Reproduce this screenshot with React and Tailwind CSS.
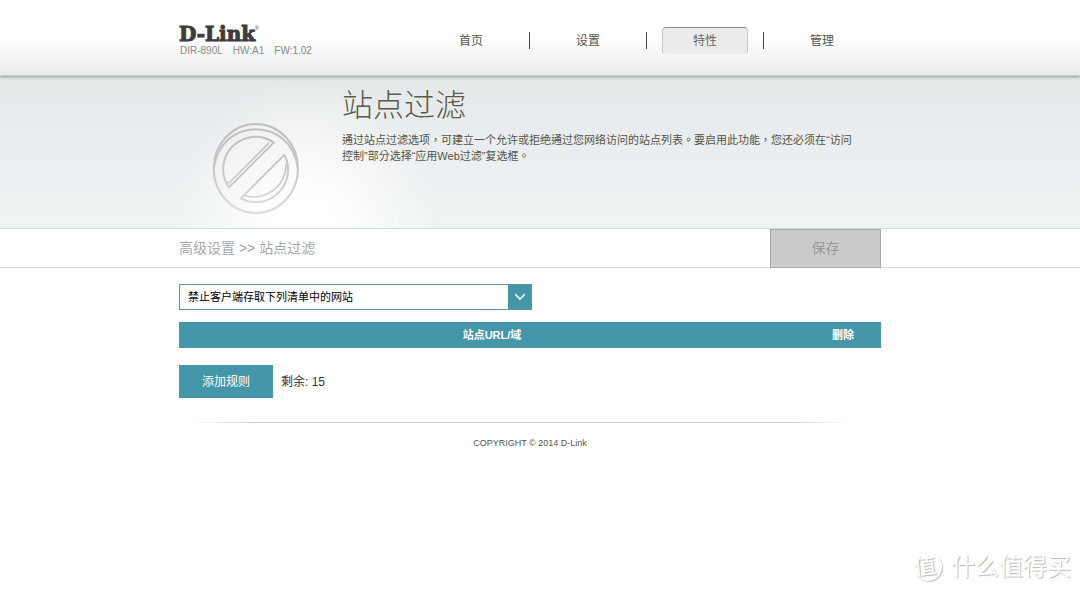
import React from "react";

const NAV = ["首页", "设置", "特性", "管理"];
const ACTIVE = "特性";

function Header() {
  return (
    <header className="relative z-10 border-b border-[#cdd2d2] bg-linear-to-b from-white from-50% to-[#e9ebeb] pr-5 shadow-[0_1px_3px_rgba(90,100,100,0.6)]">
      <div className="mx-auto flex h-[75px] max-w-[702px] items-start">
        <div className="w-[233px] shrink-0 pt-6">
          <a href="#home" className="flex items-start text-[#3c3c3c]">
            <span className="font-['DejaVu_Serif'] text-[20px] leading-5 font-bold [-webkit-text-stroke:1px_#3c3c3c]">
              D-Link
            </span>
            <span className="text-[5px] leading-2">®</span>
          </a>
          <p className="flex gap-[10px] pl-px text-[10px] leading-[14px] text-[#8a8a8a]">
            <span>DIR-890L</span>
            <span>HW:A1</span>
            <span>FW:1.02</span>
          </p>
        </div>
        <nav className="flex pt-[27px]">
          {NAV.map((item, i) => (
            <div key={item} className="flex w-[117px] shrink-0 items-center">
              <span className={i === 0 ? "h-[17px] w-px" : "h-[17px] w-px bg-[#444]"} />
              <a
                href={"#" + item}
                className={
                  item === ACTIVE
                    ? "mx-auto flex h-[27px] w-[86px] items-center justify-center rounded-[4px] border border-x-[#c4c4c4] border-t-[#8a8a8a] border-b-[#ededed] bg-[#ebebeb] text-[12px] text-[#666]"
                    : "mx-auto flex h-[27px] w-[86px] items-center justify-center text-[12px] text-[#555]"
                }
              >
                {item}
              </a>
            </div>
          ))}
        </nav>
      </div>
    </header>
  );
}

function BlockIcon() {
  return (
    <svg viewBox="60 120 280 290" className="h-[97px] w-[93px]" fill="none" aria-hidden="true">
      <defs>
        <linearGradient id="ring" gradientUnits="userSpaceOnUse" x1="0" y1="125" x2="0" y2="405">
          <stop offset="0" stopColor="#bcbebf" />
          <stop offset="0.6" stopColor="#c8c9ca" />
          <stop offset="1" stopColor="#dedfe0" />
        </linearGradient>
      </defs>
      <g stroke="url(#ring)" strokeWidth="6" strokeLinejoin="round">
        <ellipse cx="198" cy="265" rx="127" ry="134" />
        <path d="M72 262C82 192 133 147 198 147s117 45 126 115" />
        <path d="M117 322A97 97 0 0 1 252 187Z" />
        <path d="M112 307L118 308 238 188" strokeWidth="5" />
        <path d="M153 355L284 224A97 97 0 0 1 153 355Z" />
        <path d="M163 346C195 356 228 348 254 328C280 307 290 282 289 250" strokeWidth="5" />
      </g>
    </svg>
  );
}

function Hero() {
  return (
    <section className="border-b border-[#d3dada] bg-[radial-gradient(ellipse_135px_165px_at_calc(50%_-_235px)_165px,#fff_25%,rgba(255,255,255,0.5)_60%,transparent),linear-gradient(#e4e8e9,#ebeef1_50%,#eef3f3)] pr-5">
      <div className="mx-auto flex h-[152px] max-w-[702px]">
        <div className="w-[163px] shrink-0 pt-11 pl-[31px]">
          <BlockIcon />
        </div>
        <div className="pt-[10px]">
          <h1 className="text-[31px] leading-10 font-light text-[#5a5a48]">站点过滤</h1>
          <p className="mt-[6px] max-w-[520px] font-['Liberation_Sans','Noto_Sans_CJK_TC',sans-serif] text-[11px] leading-4 text-[#54543f]">
            通过站点过滤选项，可建立一个允许或拒绝通过您网络访问的站点列表。要启用此功能，您还必须在“访问控制”部分选择“应用Web过滤”复选框。
          </p>
        </div>
      </div>
    </section>
  );
}

function CrumbBar() {
  return (
    <div className="border-b border-[#dcdfdf] pr-5">
      <div className="mx-auto flex h-[38px] max-w-[702px] items-center justify-between">
        <p className="text-[14px] text-[#a8a8a8]">高级设置 &gt;&gt; 站点过滤</p>
        <button
          type="button"
          className="-mb-px h-[39px] w-[111px] border border-[#a9a9a9] bg-[#cbcbcb] text-[14px] text-[#999]"
        >
          保存
        </button>
      </div>
    </div>
  );
}

function RulesForm() {
  return (
    <main className="mx-auto max-w-[702px] pt-4">
      <div className="relative flex h-[26px] w-[353px] border border-[#5f929b]">
        <select
          aria-label="过滤方式"
          className="w-full appearance-none bg-white pr-7 pl-2 text-[11px] text-black"
        >
          <option>禁止客户端存取下列清单中的网站</option>
        </select>
        <span className="pointer-events-none absolute inset-y-0 right-0 flex w-[23px] items-center justify-center bg-[#4396a8]">
          <svg viewBox="0 0 12 8" className="h-2 w-3" fill="none" stroke="#fff" strokeWidth="1.6" aria-hidden="true">
            <path d="M1.2 1.2L6 6l4.8-4.8" />
          </svg>
        </span>
      </div>

      <table className="mt-3 w-full table-fixed bg-[#4696a9] text-[11px] text-white">
        <thead>
          <tr className="h-[26px]">
            <th scope="col" className="font-bold">站点URL/域</th>
            <th scope="col" className="w-[76px] font-bold">删除</th>
          </tr>
        </thead>
      </table>

      <div className="mt-[17px] flex items-center gap-2">
        <button type="button" className="h-[33px] w-[94px] bg-[#4696a9] text-[12px] text-white">
          添加规则
        </button>
        <p className="text-[12px] text-[#333]">剩余: 15</p>
      </div>
    </main>
  );
}

function Footer() {
  return (
    <footer className="mx-auto mt-6 max-w-[702px]">
      <div className="mx-3 h-px bg-[linear-gradient(to_right,transparent,#cccccc_10%,#cccccc_88%,transparent_97%)]" />
      <p className="pt-3 text-center text-[9px] leading-4 text-[#555]">COPYRIGHT © 2014 D-Link</p>
    </footer>
  );
}

function Watermark() {
  return (
    <div className="absolute right-[9px] bottom-[11px] flex items-center gap-[9px] text-white [text-shadow:1px_1px_1px_#b8b8b8]">
      <span className="flex size-7 items-center justify-start rounded-full shadow-[1px_1px_1px_#c4c4c4]">
        <span className="-rotate-6 text-[22px] leading-7 font-medium">值</span>
      </span>
      <span className="text-[24px] leading-7">什么值得买</span>
    </div>
  );
}

export default function App() {
  return (
    <div className="relative min-h-screen bg-white font-['Liberation_Sans','Noto_Sans_CJK_SC',sans-serif]">
      <Header />
      <Hero />
      <CrumbBar />
      <div className="pr-5">
        <RulesForm />
        <Footer />
      </div>
      <Watermark />
    </div>
  );
}
